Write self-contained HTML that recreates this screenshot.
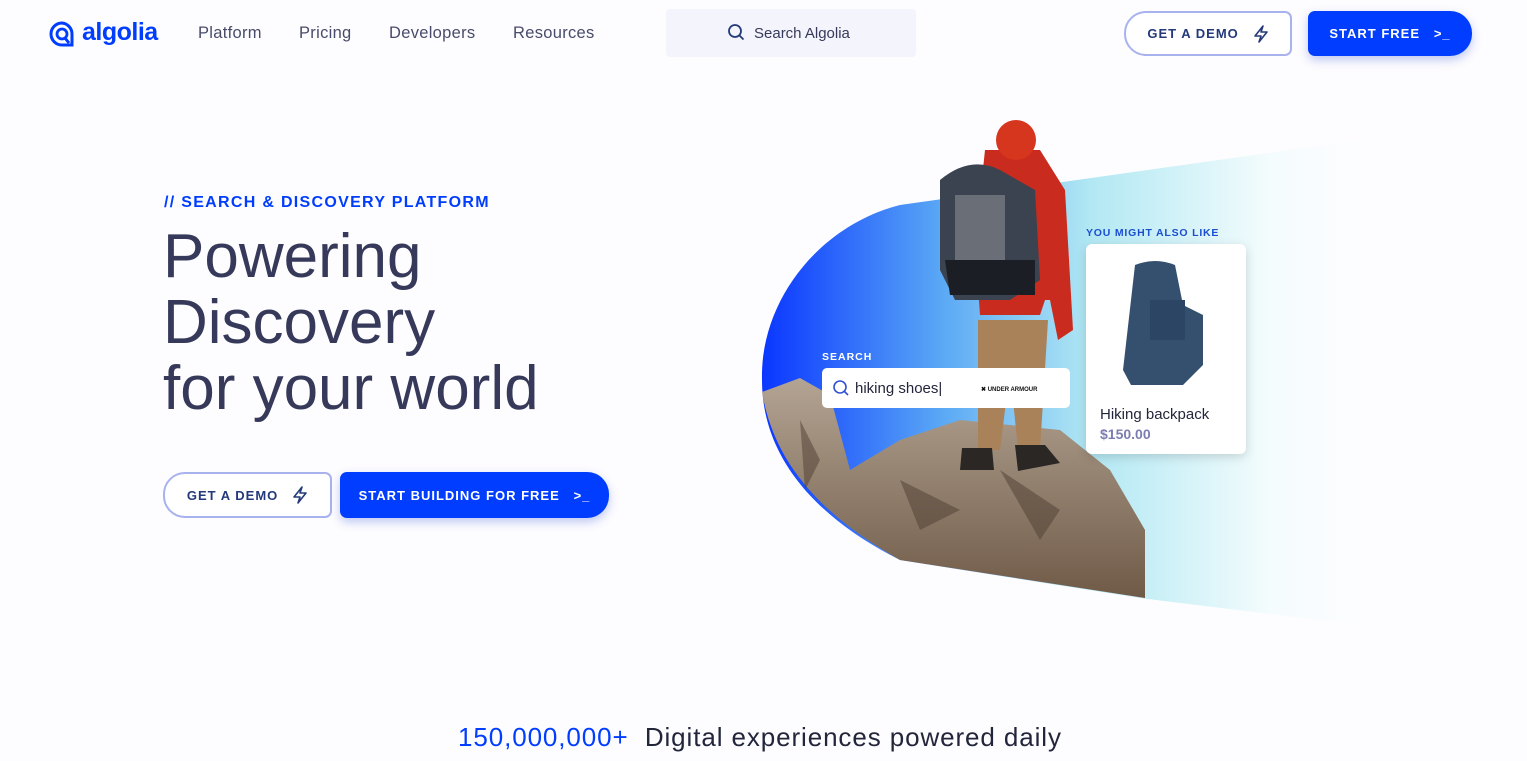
<!DOCTYPE html>
<html><head><meta charset="utf-8">
<style>
*{margin:0;padding:0;box-sizing:border-box}
body{width:1527px;height:761px;overflow:hidden;background:#fdfdff;font-family:"Liberation Sans",sans-serif;position:relative;color:#36395a}
.a{position:absolute}
.nav{font-size:16.5px;color:#484c6a;top:24px;letter-spacing:.3px}
.btn{position:absolute;display:flex;align-items:center;justify-content:center;font-weight:bold;font-size:13px;letter-spacing:1px}
.demo{border:2px solid #a7b2ee;color:#23397a;background:#fff;border-radius:22px 7px 7px 22px}
.start{background:#003dff;color:#fff;border-radius:7px 22px 22px 7px;box-shadow:0 4px 10px rgba(0,40,200,.25)}
</style></head><body>
<svg class="a" style="left:48px;top:20px" width="28" height="28" viewBox="0 0 28 28"><path d="M14 3a11 11 0 1 0 0 22h10V14A11 11 0 0 0 14 3z" fill="none" stroke="#003dff" stroke-width="3"/><circle cx="14" cy="14" r="5" fill="none" stroke="#003dff" stroke-width="2.8"/><path d="M17 18l4 5" stroke="#003dff" stroke-width="3"/></svg>
<div class="a" style="left:82px;top:18px;font-size:25px;font-weight:bold;color:#003dff;letter-spacing:-0.5px">algolia</div>
<div class="a nav" style="left:198px">Platform</div>
<div class="a nav" style="left:299px">Pricing</div>
<div class="a nav" style="left:389px">Developers</div>
<div class="a nav" style="left:513px">Resources</div>
<div class="a" style="left:666px;top:9px;width:250px;height:48px;background:#f4f4fc;border-radius:4px"></div>
<svg class="a" style="left:727px;top:23px" width="18" height="18" viewBox="0 0 18 18"><circle cx="8" cy="8" r="6" fill="none" stroke="#23397a" stroke-width="1.8"/><path d="M12.5 12.5l4 4" stroke="#23397a" stroke-width="1.8"/></svg>
<div class="a" style="left:754px;top:25px;font-size:15px;color:#36395a">Search Algolia</div>
<div class="btn demo" style="left:1124px;top:11px;width:168px;height:45px">GET A DEMO&nbsp;&nbsp;&nbsp;<svg width="16" height="18" viewBox="0 0 16 18"><path d="M10 1L2 11h6l-2 6l8-10H8z" fill="none" stroke="#23397a" stroke-width="1.6" stroke-linejoin="round"/></svg></div>
<div class="btn start" style="left:1308px;top:11px;width:164px;height:45px">START FREE&nbsp;&nbsp;&nbsp;&gt;_</div>

<div class="a" style="left:164px;top:194px;font-size:16px;font-weight:bold;color:#003dff;letter-spacing:1.3px">// SEARCH &amp; DISCOVERY PLATFORM</div>
<div class="a" style="left:163px;top:224px;font-size:62px;line-height:66px;color:#36395a">Powering<br>Discovery<br>for your world</div>
<div class="btn demo" style="left:163px;top:472px;width:169px;height:46px">GET A DEMO&nbsp;&nbsp;&nbsp;<svg width="16" height="18" viewBox="0 0 16 18"><path d="M10 1L2 11h6l-2 6l8-10H8z" fill="none" stroke="#23397a" stroke-width="1.6" stroke-linejoin="round"/></svg></div>
<div class="btn start" style="left:340px;top:472px;width:269px;height:46px">START BUILDING FOR FREE&nbsp;&nbsp;&nbsp;&gt;_</div>

<svg class="a" style="left:740px;top:100px" width="640" height="540" viewBox="740 100 640 540">
<defs>
<linearGradient id="g" x1="0" y1="0" x2="1" y2="0"><stop offset="0" stop-color="#0a36ff"/><stop offset=".3" stop-color="#5aa8f5"/><stop offset=".55" stop-color="#b2e8f3"/><stop offset=".85" stop-color="#f4fcfd"/><stop offset="1" stop-color="#fdfdff"/></linearGradient>
<linearGradient id="r" x1="0" y1="0" x2="0" y2="1"><stop offset="0" stop-color="#b4a493"/><stop offset="1" stop-color="#6f5a47"/></linearGradient>
</defs>
<path d="M762 380C760 300 820 225 900 205L1360 140L1360 625L1140 598L900 560C820 520 762 460 762 380Z" fill="url(#g)"/>
<path d="M762 392L800 378L830 395L850 470L900 440L960 420L1060 430L1110 470L1145 530L1145 598L900 560C830 520 775 470 762 392Z" fill="url(#r)"/>
<path d="M800 420l20 40l-15 30zM900 480l60 30l-40 20zM1000 470l60 40l-20 30z" fill="#4d3e31" opacity=".5"/>
<path d="M978 320h70l-8 130h-22l-8-80l-10 80h-22z" fill="#a9825a"/>
<path d="M962 448h30l2 22h-34zM1015 445h30l15 18l-42 8z" fill="#2a2725"/>
<path d="M985 150h55l25 40l8 140l-15 10l-8-40l-5 0l-5 15h-60l-5-70z" fill="#c92b1e"/>
<path d="M940 180q30-25 60-10l35 20l5 90l-30 20h-55l-15-30z" fill="#3b4350"/>
<path d="M955 195h50v70h-50z" fill="#6a6e77"/>
<path d="M945 260h90v35h-85z" fill="#1b1e24"/>
<circle cx="1016" cy="140" r="20" fill="#d6351e"/>
<text x="822" y="360" font-family="Liberation Sans" font-size="10.5" font-weight="bold" fill="#fff" letter-spacing="1">SEARCH</text>
<rect x="822" y="368" width="248" height="40" rx="5" fill="#fff"/>
<circle cx="840" cy="387" r="6" fill="none" stroke="#3350d0" stroke-width="1.6"/><path d="M844 391l4 4" stroke="#3350d0" stroke-width="1.6"/>
<text x="855" y="393" font-family="Liberation Sans" font-size="15" fill="#23263b">hiking shoes|</text>
<text x="981" y="391" font-family="Liberation Sans" font-size="6" font-weight="bold" fill="#111">✖ UNDER ARMOUR</text>
<text x="1086" y="236" font-family="Liberation Sans" font-size="10.5" font-weight="bold" fill="#1a4fd0" letter-spacing=".8">YOU MIGHT ALSO LIKE</text>
<rect x="1086" y="244" width="160" height="210" rx="6" fill="#fff" style="filter:drop-shadow(0 3px 5px rgba(0,0,0,.15))"/>
<path d="M1135 265q20-8 40 0l8 40l20 10l0 50l-20 20h-52l-8-15z" fill="#35506f"/>
<path d="M1150 300h35v40h-35z" fill="#2c4565"/>
<text x="1100" y="419" font-family="Liberation Sans" font-size="15" fill="#23263b">Hiking backpack</text>
<text x="1100" y="439" font-family="Liberation Sans" font-size="14" font-weight="bold" fill="#7c7db0">$150.00</text>
</svg>

<div class="a" style="left:458px;top:722px;font-size:26px;letter-spacing:.9px;white-space:nowrap"><span style="color:#003dff">150,000,000+</span>&nbsp;&nbsp;<span style="color:#23263b">Digital experiences powered daily</span></div>
</body></html>
